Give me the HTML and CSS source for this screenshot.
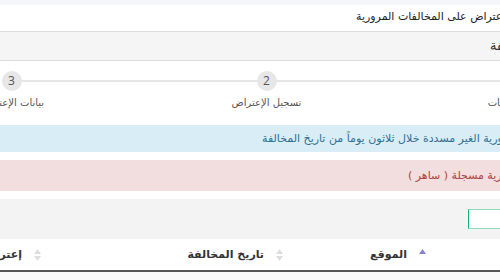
FILE: index.html
```html
<!DOCTYPE html>
<html lang="ar">
<head>
<meta charset="utf-8">
<title>الإعتراض على المخالفات المرورية</title>
<link rel="stylesheet" href="styles.css">
</head>
<body>
<div class="page">
  <div class="topbar"></div>
  <div class="title">تقديم الإعتراض على المخالفات المرورية</div>
  <div class="panel-heading">بيانات المخالفة</div>
  <div class="steps">
    <div class="step"><span class="circle">1</span><span class="label">اختيار المخالفات</span></div>
    <div class="step"><span class="circle">2</span><span class="label">تسجيل الإعتراض</span></div>
    <div class="step"><span class="circle">3</span><span class="label">بيانات الإعتراض</span></div>
  </div>
  <div class="alert alert-info">يمكن الإعتراض على المخالفات المرورية الغير مسددة خلال ثلاثون يوماً من تاريخ المخالفة</div>
  <div class="alert alert-danger">لا توجد مخالفات مرورية مسجلة ( ساهر )</div>
  <div class="toolbar"><input class="search" type="text"></div>
  <div class="thead">
    <div class="th"><svg class="sort" width="7" height="12" viewBox="0 0 7 12"><path d="M0 5 L3.5 0 L7 5 Z" fill="#ddd"/><path d="M0 7 L3.5 12 L7 7 Z" fill="#ddd"/></svg><span>رقم المخالفة</span></div>
    <div class="th"><svg class="sort" width="7" height="12" viewBox="0 0 7 12"><path d="M0 5 L3.5 0 L7 5 Z" fill="#8383dc"/></svg><span>الموقع</span></div>
    <div class="th"><svg class="sort" width="7" height="12" viewBox="0 0 7 12"><path d="M0 5 L3.5 0 L7 5 Z" fill="#ddd"/><path d="M0 7 L3.5 12 L7 7 Z" fill="#ddd"/></svg><span>تاريخ المخالفة</span></div>
    <div class="th"><svg class="sort" width="7" height="12" viewBox="0 0 7 12"><path d="M0 5 L3.5 0 L7 5 Z" fill="#ddd"/><path d="M0 7 L3.5 12 L7 7 Z" fill="#ddd"/></svg><span>إعتراض</span></div>
  </div>
  <div class="tbody-row"></div>
</div>
</body>
</html>
```
FILE: styles.css
```css
html, body {
  margin: 0;
  padding: 0;
  overflow: hidden;
  background: #fff;
}
body {
  width: 500px;
  height: 280px;
}
.page {
  direction: rtl;
  width: 1200px;
  margin-left: -200px;
  font-family: "DejaVu Sans", sans-serif;
  color: #333;
}
.topbar {
  height: 5px;
  background: #f4f6f9;
}
.title {
  height: 26px;
  line-height: 24px;
  font-size: 11px;
  text-align: left;
  padding-left: 556px;
  color: #222;
  white-space: nowrap;
}
.panel-heading {
  height: 28px;
  line-height: 28px;
  background: #f5f5f5;
  border-top: 1px solid #ddd;
  border-bottom: 1px solid #ddd;
  font-size: 13px;
  text-align: left;
  padding-left: 690px;
  white-space: nowrap;
}
.steps {
  display: grid;
  grid-template-columns: repeat(3, 255px);
  padding: 10px 351px 15px 84px;
}
.step {
  position: relative;
  display: flex;
  flex-direction: column;
  align-items: center;
}
.step:not(:last-child)::after {
  content: "";
  position: absolute;
  top: 9px;
  right: 50%;
  width: 100%;
  height: 2px;
  background: #e6e6e6;
}
.circle {
  position: relative;
  z-index: 1;
  width: 20px;
  height: 20px;
  border-radius: 50%;
  background: #e7e7e7;
  color: #555;
  font-family: "Open Sans", sans-serif;
  font-size: 12px;
  line-height: 20px;
  text-align: center;
}
.label {
  margin-top: 5px;
  font-size: 10px;
  line-height: 14px;
  color: #555;
  white-space: nowrap;
}
.alert {
  font-size: 11px;
  line-height: 17px;
  text-align: left;
  white-space: nowrap;
}
.alert-info {
  background: #d9edf7;
  color: #31708f;
  padding: 5px 0 5px 462px;
}
.alert-danger {
  margin-top: 8px;
  background: #f2dede;
  color: #a94442;
  padding: 7px 0 7px 608px;
}
.toolbar {
  margin-top: 8px;
  height: 40px;
  background: #f3f3f3;
  display: flex;
  align-items: center;
  justify-content: flex-end;
  padding-left: 668px;
}
.search {
  box-sizing: border-box;
  width: 160px;
  height: 20px;
  margin: 0;
  border: 1px solid #8fdcb6;
  border-left-color: #16b36e;
  background: #fff;
  outline: none;
}
.thead {
  display: grid;
  grid-template-columns: 569px 143px 242px 1fr;
  height: 31px;
  border-bottom: 2px solid #555;
}
.th {
  display: flex;
  align-items: center;
  gap: 12px;
  padding-right: 5px;
  font-size: 11px;
  font-weight: bold;
  color: #333;
  white-space: nowrap;
}
.sort {
  flex: none;
  display: block;
}
.tbody-row {
  height: 40px;
  background: #f9f9f9;
}
```
